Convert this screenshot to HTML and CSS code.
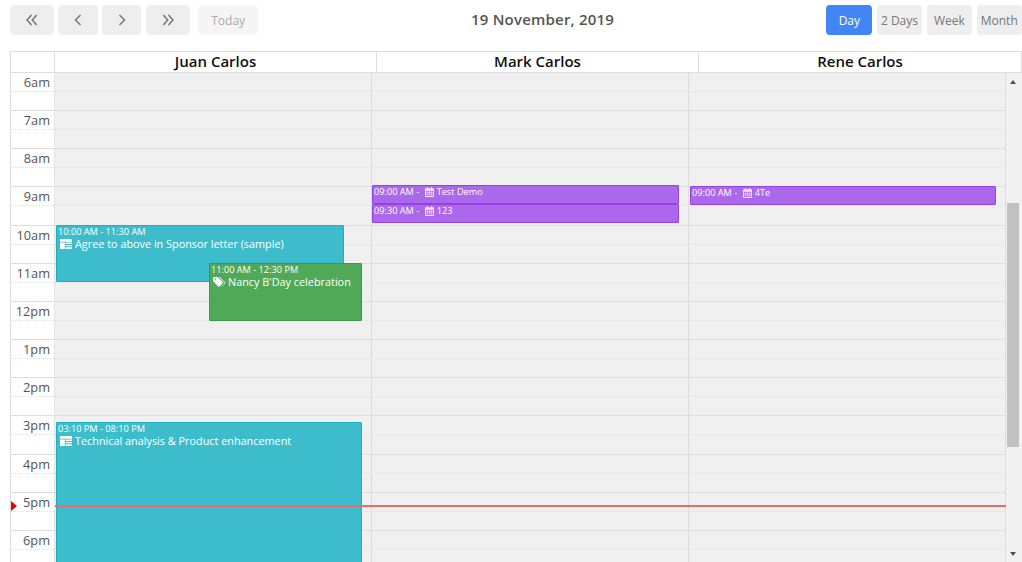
FILE: index.html
```html
<!DOCTYPE html>
<html lang="en">
<head>
<meta charset="utf-8">
<title>Calendar</title>
<link rel="stylesheet" href="styles.css">
</head>
<body>
<svg class="defs" aria-hidden="true">
  <symbol id="i-card" viewBox="0 0 12 10"><path fill="currentColor" d="M.5 0h11a.5.5 0 0 1 .5.5V2.800H0V.5A.5.5 0 0 1 .5 0zM0 3.600h4.800V10H.5a.5.5 0 0 1-.5-.5zM5.600 3.600H12v1.300H5.600zM5.600 5.900H12v1.300H5.600zM5.600 8.200H12v1.300a.5.5 0 0 1-.5.5H5.600z"/></symbol>
  <symbol id="i-tags" viewBox="0 0 14 11"><path fill="currentColor" d="M.6 0h4.200l5.600 5.600a1 1 0 0 1 0 1.400L7 10.400a1 1 0 0 1-1.400 0L0 4.800V.6A.6.6 0 0 1 .6 0zm1.600 1.400a.9.9 0 1 0 0 1.800.9.9 0 0 0 0-1.800z"/><path fill="currentColor" d="M6.300 0h1l5.700 5.700a1.100 1.100 0 0 1 0 1.500l-3.300 3.300a1 1 0 0 1-1 .3l3.400-3.500a1.100 1.100 0 0 0 0-1.600z"/></symbol>
  <symbol id="i-cal" viewBox="0 0 10 11"><path fill="currentColor" fill-rule="evenodd" d="M2 0h1.200v1.200h3.600V0H8v1.200h1.300c.4 0 .7.3.7.7v8.400c0 .4-.3.7-.7.7H.7a.7.7 0 0 1-.7-.7V1.900c0-.4.3-.7.7-.7H2zM1 4v1.500h1.800V4zm2.400 0v1.500h1.300V4zm1.900 0v1.500h1.300V4zm1.900 0v1.500H9V4zM1 6.100v1.400h1.800V6.100zm2.400 0v1.400h1.300V6.100zm1.900 0v1.400h1.300V6.100zm1.900 0v1.400H9V6.100zM1 8.100V10h1.800V8.100zm2.400 0V10h1.300V8.100zm1.900 0V10h1.300V8.100zm1.900 0V10H9V8.100z"/></symbol>
</svg>
<main class="calendar">
  <header class="toolbar">
    <div class="btn-group">
      <button class="btn btn-wide"><svg class="chev" viewBox="0 0 12 12"><path d="M5.500 1 1 6l4.500 5M10.800 1 6.300 6l4.500 5"/></svg></button>
      <button class="btn btn-nav"><svg class="chev" viewBox="0 0 12 12"><path d="M8.500 1 3.500 6l5 5"/></svg></button>
      <button class="btn btn-nav"><svg class="chev" viewBox="0 0 12 12"><path d="M3.500 1l5 5-5 5"/></svg></button>
      <button class="btn btn-wide"><svg class="chev" viewBox="0 0 12 12"><path d="M1.200 1l4.500 5-4.500 5M6.500 1 11 6l-4.500 5"/></svg></button>
      <button class="btn btn-today">Today</button>
    </div>
    <h1 class="title">19 November, 2019</h1>
    <div class="view-group">
      <button class="btn btn-view btn-active">Day</button>
      <button class="btn btn-view">2 Days</button>
      <button class="btn btn-view">Week</button>
      <button class="btn btn-view">Month</button>
    </div>
  </header>

  <section class="grid">
    <div class="head">
      <div class="head-gutter"></div>
      <div class="head-cell">Juan Carlos</div>
      <div class="head-cell">Mark Carlos</div>
      <div class="head-cell head-last">Rene Carlos</div>
    </div>
    <div class="body">
      <div class="gutter">
        <div class="hour"><span class="hour-label">6am</span></div>
        <div class="hour"><span class="hour-label">7am</span></div>
        <div class="hour"><span class="hour-label">8am</span></div>
        <div class="hour"><span class="hour-label">9am</span></div>
        <div class="hour"><span class="hour-label">10am</span></div>
        <div class="hour"><span class="hour-label">11am</span></div>
        <div class="hour"><span class="hour-label">12pm</span></div>
        <div class="hour"><span class="hour-label">1pm</span></div>
        <div class="hour"><span class="hour-label">2pm</span></div>
        <div class="hour"><span class="hour-label">3pm</span></div>
        <div class="hour"><span class="hour-label">4pm</span></div>
        <div class="hour"><span class="hour-label">5pm</span></div>
        <div class="hour"><span class="hour-label">6pm</span></div>
      </div>
      <div class="days">
        <div class="lines">
          <div class="hour"></div><div class="hour"></div><div class="hour"></div><div class="hour"></div>
          <div class="hour"></div><div class="hour"></div><div class="hour"></div><div class="hour"></div>
          <div class="hour"></div><div class="hour"></div><div class="hour"></div><div class="hour"></div>
          <div class="hour"></div>
        </div>
        <div class="col">
          <article class="event event-teal ev-agree">
            <div class="ev-time">10:00 AM - 11:30 AM</div>
            <div class="ev-title"><svg class="ic-card"><use href="#i-card"/></svg>Agree to above in Sponsor letter (sample)</div>
          </article>
          <article class="event event-green ev-nancy">
            <div class="ev-time">11:00 AM - 12:30 PM</div>
            <div class="ev-title"><svg class="ic-tags"><use href="#i-tags"/></svg>Nancy B'Day celebration</div>
          </article>
          <article class="event event-teal ev-tech">
            <div class="ev-time">03:10 PM - 08:10 PM</div>
            <div class="ev-title"><svg class="ic-card"><use href="#i-card"/></svg>Technical analysis &amp; Product enhancement</div>
          </article>
        </div>
        <div class="col">
          <article class="event event-purple ev-demo"><div class="ev-time">09:00 AM - <svg class="ic-cal"><use href="#i-cal"/></svg>Test Demo</div></article>
          <article class="event event-purple ev-123"><div class="ev-time">09:30 AM - <svg class="ic-cal"><use href="#i-cal"/></svg>123</div></article>
        </div>
        <div class="col">
          <article class="event event-purple ev-4te"><div class="ev-time">09:00 AM - <svg class="ic-cal"><use href="#i-cal"/></svg>4Te</div></article>
        </div>
        <div class="now-line"></div>
      </div>
      <div class="now-arrow"></div>
      <div class="scrollbar">
        <div class="sb-up"></div>
        <div class="sb-thumb"></div>
        <div class="sb-down"></div>
      </div>
    </div>
  </section>
</main>
</body>
</html>
```
FILE: styles.css
```css
* { box-sizing: border-box; }
html, body { margin: 0; height: 100%; overflow: hidden; background: #fff; }
body { font-family: "Open Sans", sans-serif; color: #555; }
.defs { display: none; }

.calendar { display: flex; flex-direction: column; height: 562px; padding: 5px 0 0 10px; }

.toolbar { display: flex; align-items: center; height: 30px; margin-bottom: 16px; position: relative; }
.btn-group, .view-group { display: flex; }
.view-group { margin-left: auto; gap: 4.400px; }
.btn {
  border: 0; border-radius: 4px; background: #eee; color: #777;
  font: 400 12px "Open Sans", sans-serif; height: 30px; padding: 0;
  display: flex; align-items: center; justify-content: center;
}
.btn-group .btn { margin-right: 4.400px; }
.btn-wide { width: 44px; }
.btn-nav { width: 39.300px; }
.btn-today { width: 60px; margin-left: 4px; background: #f5f5f5; color: #aaa; }
.btn-view { width: 45.500px; }
.btn-active { width: 46px; background: #4285f4; color: #fff; }
.chev { width: 12px; height: 12px; fill: none; stroke: #777; stroke-width: 1.500; }
.title {
  position: absolute; left: 461px; top: 0; margin: 0; line-height: 29px;
  font-size: 15px; font-weight: 600; color: #555; letter-spacing: .2px;
}

.grid { flex: 1; min-height: 0; display: flex; flex-direction: column; border: 1px solid #ddd; border-width: 1px 0 0 1px; }
.head { display: flex; height: 21px; flex: none; background: #fff; }
.head-gutter { width: 44px; border-right: 1px solid #ddd; border-bottom: 1px solid #ddd; }
.head-cell {
  width: 322px; border-right: 1px solid #ddd; border-bottom: 1px solid #ddd;
  text-align: center; font-size: 15px; font-weight: 600; line-height: 19px; color: #111;
}
.head-last { flex: 1; }

.body { flex: 1; min-height: 0; display: flex; position: relative; overflow: hidden; }
.gutter { width: 44px; flex: none; background: #fff; border-right: 1px solid #e4e4e4; }
.hour { height: 38.170px; position: relative; border-bottom: 1px solid #ddd; }
.hour::after { content: ""; position: absolute; left: 0; right: 0; top: 18px; border-top: 1px dotted #e0e0e0; }
.hour-label { display: block; text-align: right; padding-right: 4px; font-size: 12.800px; line-height: 18px; color: #555; }

.days { flex: 1; min-width: 0; display: flex; position: relative; background: #f0f0f0; }
.lines { position: absolute; inset: 0; }
.col { width: 317px; flex: none; position: relative; border-right: 1px solid #ddd; }
.col:last-of-type { border-right: 0; }

.event { position: absolute; color: #fff; border: 1px solid; border-radius: 1px; padding: 0 1px; overflow: hidden; }
.event-teal { background: #3dbdcb; border-color: #20afbf; padding-left: 1px; }
.event-green { background: #4fa957; border-color: #3b9a44; z-index: 2; }
.event-purple { background: #ab68ea; border-color: #9340e5; }
.ev-time { font-size: 9.200px; line-height: 11px; white-space: nowrap; }
.ev-title { font-size: 10.850px; line-height: 13px; padding-left: 2px; white-space: nowrap; }

.ev-agree { left: 1px; top: 152px; width: 288px; height: 57px; }
.ev-nancy { left: 154px; top: 190px; width: 153px; height: 57.500px; }
.ev-tech { left: 1px; top: 349px; width: 306px; height: 210px; }
.ev-demo { left: 0; top: 112px; width: 307px; height: 19px; }
.ev-123 { left: 0; top: 131px; width: 307px; height: 19px; }
.ev-4te { left: 1px; top: 113px; width: 306px; height: 18.500px; }

.ic-card { width: 12px; height: 10px; color: #fff; margin-right: 3px; vertical-align: -1px; }
.ic-tags { width: 13px; height: 10px; color: #fff; margin-right: 2px; vertical-align: -1px; }
.ic-cal { width: 9px; height: 10px; color: #f3e6ff; margin: 0 3px 0 3px; vertical-align: -2px; }

.now-line { position: absolute; left: 0; right: 0; top: 432px; height: 2px; background: #ec6a6a; z-index: 3; }
.now-arrow {
  position: absolute; left: 0; top: 428px; z-index: 3;
  border-left: 6px solid #e00; border-top: 5px solid transparent; border-bottom: 5px solid transparent;
}

.scrollbar { width: 16px; flex: none; position: relative; background: #f1f1f1; }
.sb-thumb { position: absolute; left: 1px; top: 130px; width: 12px; height: 244px; background: #c1c1c1; }
.sb-up, .sb-down { position: absolute; left: 4px; width: 0; height: 0; border-left: 3.500px solid transparent; border-right: 3.500px solid transparent; }
.sb-up { top: 7px; border-bottom: 4px solid #505050; }
.sb-down { top: 479px; border-top: 4px solid #505050; }
```
